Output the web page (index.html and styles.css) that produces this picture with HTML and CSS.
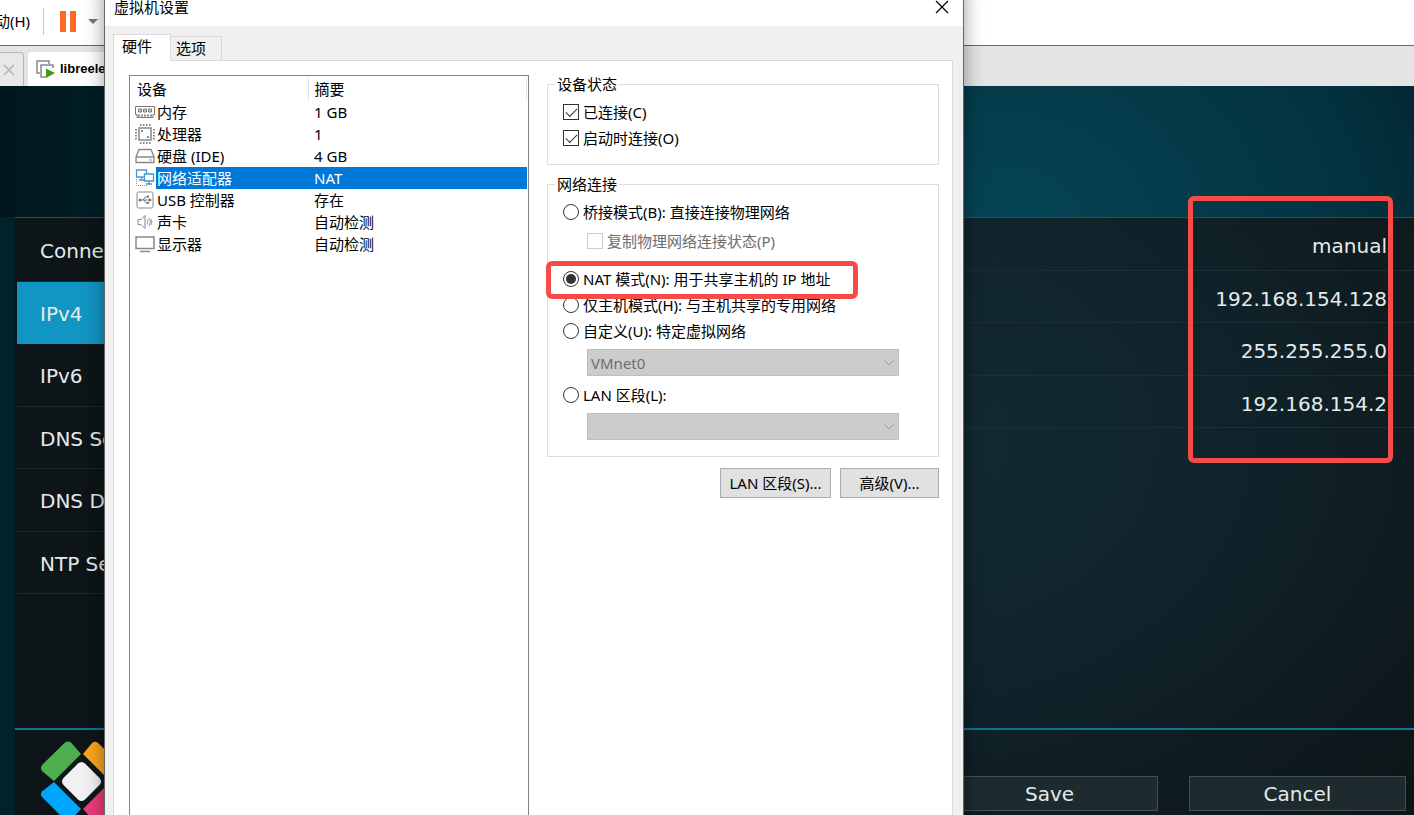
FILE: index.html
```html
<!DOCTYPE html>
<html lang="zh-CN">
<head>
<meta charset="utf-8">
<title>虚拟机设置</title>
<link rel="stylesheet" href="styles.css">
</head>
<body>
<div class="app">
  <header class="toolbar">
    <span class="menu-item">动(H)</span>
    <span class="divider"></span>
    <button class="pause" aria-label="暂停"><svg width="40" height="22" viewBox="0 0 40 22"><path fill="#fb6a20" d="M2 1h6v21H2zM12 1h6v21h-6z"/><path fill="#777" d="M30 9h10l-5 5z"/></svg></button>
  </header>
  <nav class="doc-tabs">
    <div class="doc-tab old"><svg width="12" height="12" viewBox="0 0 12 12"><path d="M1 1l10 10M11 1L1 11" stroke="#b4b4b4" stroke-width="1.5"/></svg></div>
    <div class="doc-tab current"><svg width="20" height="18" viewBox="0 0 20 18"><path d="M4 13H1V1h12v3" fill="none" stroke="#888" stroke-width="1.5"/><path d="M17 8V5H5v12h5" fill="none" stroke="#888" stroke-width="1.5"/><path d="M10 8.500l9 4.500-9 5z" fill="#3f9c13"/></svg><b>libreelec</b></div>
  </nav>
  <main class="vm">
    <div class="panel">
      <div class="columns">
        <ul class="side">
          <li>Connection</li><li class="active">IPv4</li><li>IPv6</li><li>DNS Servers</li><li>DNS Domains</li><li>NTP Servers</li>
        </ul>
        <ul class="values">
          <li>manual</li><li>192.168.154.128</li><li>255.255.255.0</li><li>192.168.154.2</li>
        </ul>
      </div>
      <footer class="foot">
        <svg class="logo" width="84" height="84" viewBox="39 740 84 84">
          <path fill="#4fae50" d="M80 754L53 781L41 771Q39 768 41 765L64 742.500Q67 740.500 70 742.500z"/>
          <path fill="#f9a51f" d="M82 754L91 743Q94 740.500 97 743L120 765Q122 768 120 771L109 781z"/>
          <path fill="#00a6fb" d="M53 782L80 809L70 820Q67 822 64 820L41 797Q39 794 41 791.500z"/>
          <path fill="#ea3c7b" d="M109 782L82 809L92 820Q95 822 98 820L120 797Q122 794 120 791.500z"/>
          <path fill="#0d181b" d="M81 754L108.500 781.500L81 809L53.500 781.500z"/>
          <path fill="#f1f0f2" d="M77 763.500Q80.500 760.500 84 763.500L98.500 778Q101.500 781.500 98.500 785L84 799.500Q80.500 802.500 77 799.500L62.500 785Q59.500 781.500 62.500 778z"/>
        </svg>
        <div class="foot-buttons"><button>Save</button><button>Cancel</button></div>
      </footer>
    </div>
  </main>
</div>

<section class="dialog" role="dialog" aria-label="虚拟机设置">
  <div class="title"><span>虚拟机设置</span><button class="close" aria-label="关闭"><svg width="14" height="14" viewBox="0 0 14 14"><path d="M1 1l12 12M13 1L1 13" stroke="#000" stroke-width="1.200"/></svg></button></div>
  <div class="tabs"><button class="tab on">硬件</button><button class="tab">选项</button></div>
  <div class="page">
    <div class="devices">
      <table>
        <colgroup><col class="c-icon"><col class="c-name"><col></colgroup>
        <thead><tr><th colspan="2">设备</th><th>摘要</th></tr></thead>
        <tbody>
          <tr><td><svg viewBox="0 0 20 20"><path d="M.5 4.500h19v8H18v3H2v-3H.5z" fill="#fff" stroke="#777"/><path d="M3.500 7h3v3h-3zM8.500 7h3v3h-3zM13.500 7h3v3h-3z" fill="#ccc" stroke="#777"/><path d="M3 13.500h14" stroke="#888" stroke-width="2" stroke-dasharray="2 1"/></svg></td><td>内存</td><td>1 GB</td></tr>
          <tr><td><svg viewBox="0 0 20 20"><rect x="4" y="4" width="12" height="12" fill="#fff" stroke="#888" stroke-width="1.500"/><path d="M5 1h11M5 19h11M1 5v11M19 5v11" stroke="#888" stroke-width="2" stroke-dasharray="1.500 1.500"/><path d="M6 6h2v2H6zM12 12h2v2h-2z" fill="#888"/></svg></td><td>处理器</td><td>1</td></tr>
          <tr><td><svg viewBox="0 0 20 20"><path d="M1 11L4 3.500h12L19 11v5.500H1zM1 11h18" fill="#fff" stroke="#888" stroke-width="1.300"/><path d="M14 14h3" stroke="#888"/></svg></td><td>硬盘 (IDE)</td><td>4 GB</td></tr>
          <tr class="selected"><td><svg viewBox="0 0 20 20"><path d="M1.500 2h10v7h-10zM4 12h5M6.500 9v3" fill="#fff" stroke="#4596cf" stroke-width="1.300"/><path d="M9.500 6h9v7h-9zM14 13v3M11 16h6" fill="#fff" stroke="#4596cf" stroke-width="1.300"/><path d="M1.500 11v6.500H12" fill="none" stroke="#5aa5dc" stroke-dasharray="1 1"/></svg></td><td>网络适配器</td><td>NAT</td></tr>
          <tr><td><svg viewBox="0 0 20 20"><rect x="2" y="2" width="16" height="16" rx="1.500" fill="#fff" stroke="#888"/><path d="M5 10h10M8 10l2-3h3M9 10l2 3h2" fill="none" stroke="#777"/><path d="M14 8l3 2-3 2zM12 5.500h2v2h-2zM12 12h2v2h-2z" fill="#777"/><circle cx="5" cy="10" r="1.500" fill="#777"/></svg></td><td>USB 控制器</td><td>存在</td></tr>
          <tr><td><svg viewBox="0 0 20 20"><path d="M3 7.500h3l4-4v13l-4-4H3z" fill="#fff" stroke="#888"/><path d="M12 7.500q2 2.500 0 5M14 6q3 4 0 8M16 7q2 3 0 6" fill="none" stroke="#999"/></svg></td><td>声卡</td><td>自动检测</td></tr>
          <tr><td><svg viewBox="0 0 20 20"><path d="M1 3h18v11.500H1z" fill="#fff" stroke="#888" stroke-width="1.500"/><path d="M5 17.500h10" stroke="#888" stroke-width="1.500"/></svg></td><td>显示器</td><td>自动检测</td></tr>
        </tbody>
      </table>
    </div>
    <form class="settings">
      <fieldset class="status">
        <legend>设备状态</legend>
        <label><input type="checkbox" checked>已连接(C)</label>
        <label><input type="checkbox" checked>启动时连接(O)</label>
      </fieldset>
      <fieldset class="network">
        <legend>网络连接</legend>
        <label><input type="radio" name="net">桥接模式(B): 直接连接物理网络</label>
        <label class="sub"><input type="checkbox" disabled>复制物理网络连接状态(P)</label>
        <label class="nat"><input type="radio" name="net" checked>NAT 模式(N): 用于共享主机的 IP 地址</label>
        <label><input type="radio" name="net">仅主机模式(H): 与主机共享的专用网络</label>
        <label><input type="radio" name="net">自定义(U): 特定虚拟网络</label>
        <div class="combo"><select disabled aria-label="特定虚拟网络"><option>VMnet0</option></select><svg width="10" height="6" viewBox="0 0 10 6"><path d="M.5.500L5 5 9.500.500" fill="none" stroke="#999"/></svg></div>
        <label><input type="radio" name="net">LAN 区段(L):</label>
        <div class="combo"><select disabled aria-label="LAN 区段"><option></option></select><svg width="10" height="6" viewBox="0 0 10 6"><path d="M.5.500L5 5 9.500.500" fill="none" stroke="#999"/></svg></div>
      </fieldset>
      <div class="actions"><button type="button" class="lan">LAN 区段(S)...</button><button type="button" class="adv">高级(V)...</button></div>
    </form>
  </div>
  <div class="mark mark-nat"></div>
</section>
<div class="mark mark-ip"></div>
</body>
</html>
```
FILE: styles.css
```css
* { box-sizing: border-box; }
body {
  margin: 0;
  height: 100vh;
  overflow: hidden;
  position: relative;
  font: 15px/20px "Noto Sans", "Noto Sans CJK SC", sans-serif;
  color: #000;
}
button { font: inherit; color: inherit; padding: 0; border: 0; background: none; }
svg { display: block; flex: none; }
ul { margin: 0; padding: 0; list-style: none; }

.app { height: 100%; display: flex; flex-direction: column; }
.toolbar { height: 46px; display: flex; align-items: center; padding-bottom: 3px; border-bottom: 1px solid #686868; background: #fff; }
.menu-item { width: 30px; display: flex; justify-content: flex-end; white-space: nowrap; }
.divider { width: 1px; height: 27px; margin: 0 14px 0 13px; background: #c8c8c8; }
.doc-tabs { height: 40px; display: flex; align-items: flex-end; gap: 4px; background: #e3e4e6; }
.doc-tab { height: 34px; display: flex; align-items: center; }
.old { width: 24px; padding-left: 3px; border: 1px solid #b5b5b8; border-width: 1px 1px 0 0; border-radius: 0 4px 0 0; background: #e8e8ea; }
.current { width: 150px; padding-left: 8px; gap: 4px; background: #fff; border-radius: 4px 0 0 0; font: bold 13px/20px "Liberation Sans", sans-serif; }

.vm {
  flex: 1;
  min-height: 0;
  display: flex;
  padding: 131px 0 0 15px;
  background:
    linear-gradient(90deg, rgba(0, 12, 16, .5), rgba(0, 12, 16, 0) 180px) top / 100% 131px no-repeat,
    radial-gradient(ellipse 520px 420px at 1000px 150px, #054554, #043442 65%, #01222b 100%);
  color: #e6eaea;
  font: 20px/30px "DejaVu Sans", sans-serif;
}
.panel {
  flex: 1;
  min-width: 0;
  display: flex;
  flex-direction: column;
  border-top: 1px solid #2b5157;
  background: radial-gradient(ellipse 700px 520px at 880px 220px, #122b32, #10232a 50%, #0d1518 100%);
}
.columns { flex: 1; min-height: 0; display: flex; }
.side { width: 320px; padding: 1px 0 0 2px; }
.side li { height: 63px; display: flex; align-items: center; padding: 2px 0 0 23px; border-bottom: 1px solid #1c282b; }
.side li:nth-child(even) { height: 62px; }
.side .active { background: #1195c2; border-color: #1195c2; }
.values { flex: 1; }
.values li { height: 53px; display: flex; align-items: center; justify-content: flex-end; padding: 4px 27px 0 0; border-bottom: 1px solid #1e2e33; }
.values li:nth-child(even) { height: 52px; }
.foot { height: 87px; display: flex; justify-content: space-between; padding: 10px 8px 0 25px; border-top: 2px solid #0e7594; overflow: hidden; }
.foot-buttons { display: flex; gap: 31px; padding-top: 36px; }
.foot-buttons button { width: 217px; height: 35px; border: 1px solid #445053; background: #1d2a2e; }

.dialog {
  position: absolute;
  top: -13px;
  bottom: -13px;
  left: 104px;
  right: 450px;
  display: flex;
  flex-direction: column;
  border: 1px solid #666;
  background: #f0f0f0;
  box-shadow: 0 0 18px rgba(0, 0, 0, .4);
}
.title { height: 38px; display: flex; justify-content: space-between; align-items: center; padding: 0 14px 1px 9px; background: #fff; }
.tabs { display: flex; align-items: flex-end; height: 34px; padding-left: 8px; }
.tab { width: 51px; height: 24px; border: 1px solid #d9d9d9; border-width: 1px 1px 0 0; padding: 0 10px 1px 0; }
.tab.on { width: 58px; height: 27px; margin-bottom: -1px; padding-bottom: 4px; border-left-width: 1px; background: #fff; position: relative; z-index: 1; }
.page { flex: 1; min-height: 0; display: flex; gap: 18px; margin: 0 10px 0 8px; padding: 14px 13px 0 15px; border: 1px solid #d9d9d9; background: #fff; }

.devices { flex: 0 0 400px; padding: 1px 1px 0 0; border: 1px solid #82808a; border-bottom: 0; background: #fff; }
table { width: 100%; table-layout: fixed; border-collapse: collapse; }
.c-icon { width: 26px; }
.c-name { width: 152px; }
th { height: 24px; padding: 0 0 0 7px; font-weight: 400; text-align: left; border-right: 1px solid #e5e5e5; }
th + th { padding-left: 6px; }
td { height: 22px; padding: 0 0 0 6px; line-height: 20px; white-space: nowrap; }
td:first-child { padding-left: 5px; }
td:nth-child(2) { padding-left: 1px; }
td svg { width: 20px; height: 20px; }
.selected td:not(:first-child) { color: #fff; background: #0078d7; }

.settings { flex: 1; min-width: 0; margin-top: -1px; }
fieldset { min-width: 0; margin: 0 0 9px; padding: 0 15px; border: 1px solid #dcdcdc; }
legend { margin-left: -8px; padding: 0 2px; height: 20px; }
label { display: flex; align-items: center; gap: 4px; height: 26px; white-space: nowrap; }
legend + label { margin-top: 5px; }
.status { padding-bottom: 13px; }
.network { padding-bottom: 10px; margin-bottom: 11px; }
.sub { margin: 3px 0 12px 24px; color: #6d6d6d; }
input { appearance: none; flex: none; width: 16px; height: 16px; margin: 0; border: 1px solid #333; background: #fff; display: grid; place-items: center; }
input[type="radio"] { border-radius: 50%; }
input[type="radio"]:checked::before { content: ""; width: 10px; height: 10px; border-radius: 50%; background: #333; }
input[type="checkbox"]:checked::before { content: ""; width: 10px; height: 5px; border: solid #333; border-width: 0 0 1px 1px; transform: translateY(-1px) rotate(-45deg); }
input:disabled { border-color: #ccc; }
.combo { display: grid; align-items: center; height: 27px; margin: 5px 24px 6px 24px; }
.combo select, .combo svg { grid-area: 1 / 1; }
.combo svg { justify-self: end; margin-right: 5px; }
select { appearance: none; width: 100%; height: 27px; padding: 0 3px; border: 1px solid #bfbfbf; border-radius: 0; background: #ccc; color: #6d6d6d; font: inherit; opacity: 1; }
.actions { display: flex; justify-content: flex-end; gap: 9px; }
.actions button { height: 30px; border: 1px solid #adadad; background: #e1e1e1; }
.lan { width: 111px; }
.adv { width: 99px; }

.mark { position: absolute; border: 5px solid #f74b47; border-radius: 6px; pointer-events: none; }
.mark-nat { left: 441px; top: 273px; width: 312px; height: 38px; }
.mark-ip { right: 21px; top: 196px; width: 205px; height: 267px; }
```
